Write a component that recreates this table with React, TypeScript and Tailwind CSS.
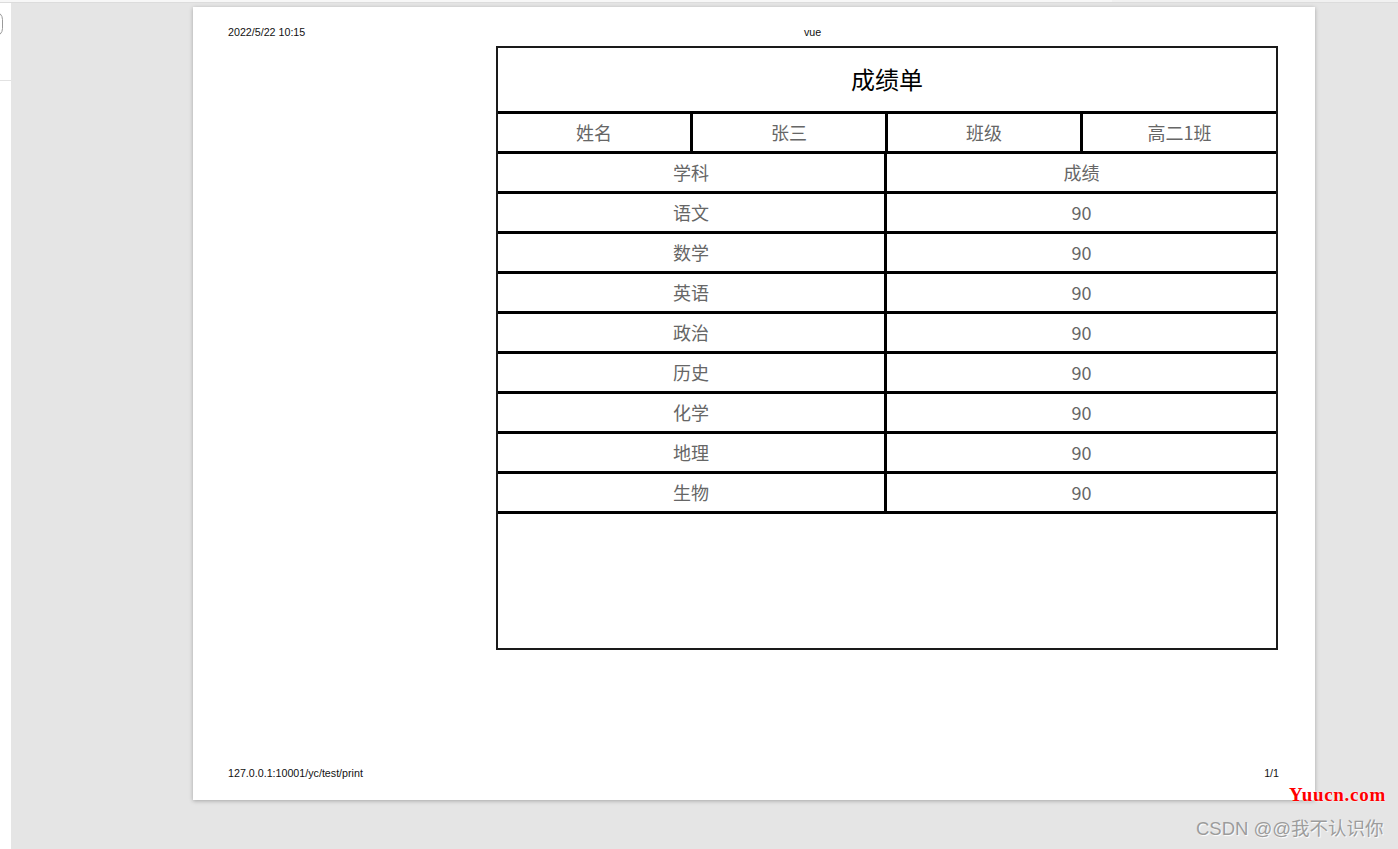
import React from "react";

const subjects = ["语文", "数学", "英语", "政治", "历史", "化学", "地理", "生物"];

const cjk = { fontFamily: '"Noto Sans CJK SC", "Noto Sans", sans-serif' };
const arial = { fontFamily: '"Liberation Sans", Arial, sans-serif' };

function Cell({ w, last, children }: { w: string; last?: boolean; children: React.ReactNode }) {
  return (
    <div className={`${w} ${last ? "" : "border-r-[3px] border-black"} flex items-center justify-center`}>
      {children}
    </div>
  );
}

export default function App() {
  return (
    <div className="relative w-[1398px] h-[849px] bg-[#e5e5e5] overflow-hidden flex flex-col">
      {/* top strip */}
      <div className="w-full h-[3px] bg-[#f1f1f1] border-b border-[#dcdcdc] flex">
        <div className="w-[1112px] h-[2px] bg-[#f7f7f7]" />
      </div>
      <div className="flex flex-1">
        {/* left strip */}
        <div className="relative w-[11px] bg-white flex flex-col">
          <div className="absolute left-[-14px] top-[8px] w-[17px] h-[26px] rounded-full border border-[#9a9a9a]" />
          <div className="mt-[77px] w-[11px] h-px bg-[#e2e2e2]" />
        </div>

        {/* page area */}
        <div className="pl-[182px] pt-[4px]">
          <div className="w-[1122px] h-[793px] bg-white shadow-[0_1px_4px_rgba(0,0,0,0.28)] flex flex-col pt-[18px] pb-[20px]">
            {/* header */}
            <div className="flex px-[35px] text-[10.7px] leading-[14px] text-[#111]" style={arial}>
              <div className="w-[576px]">2022/5/22 10:15</div>
              <div>vue</div>
            </div>

            {/* table */}
            <div className="ml-[303px] mt-[7px] w-[782px] border-2 border-[#1a1a1a]" style={cjk}>
              <div className="h-[66px] pb-[2px] border-b-[3px] border-black flex items-center justify-center text-[24px] text-black">
                成绩单
              </div>
              <div className="h-[40px] border-b-[3px] border-black flex text-[18px] text-[#666]">
                <Cell w="w-[195px]">姓名</Cell>
                <Cell w="w-[195px]">张三</Cell>
                <Cell w="w-[195px]">班级</Cell>
                <Cell w="w-[193px]" last>
                  高二1班
                </Cell>
              </div>
              <div className="h-[40px] border-b-[3px] border-black flex text-[18px] text-[#666]">
                <Cell w="w-[389px]">学科</Cell>
                <Cell w="w-[389px]" last>
                  成绩
                </Cell>
              </div>
              {subjects.map((s) => (
                <div key={s} className="h-[40px] border-b-[3px] border-black flex text-[18px] text-[#666]">
                  <Cell w="w-[389px]">{s}</Cell>
                  <Cell w="w-[389px]" last>
                    90
                  </Cell>
                </div>
              ))}
              <div className="h-[134px]" />
            </div>

            {/* footer */}
            <div className="mt-auto flex justify-between px-[35px] text-[10.7px] leading-[14px] text-[#111]" style={arial}>
              <div>127.0.0.1:10001/yc/test/print</div>
              <div className="pr-[1px]">1/1</div>
            </div>
          </div>
        </div>
      </div>

      {/* watermarks */}
      <div
        className="absolute left-[1289px] top-[784px] text-[19px] leading-[22px] font-bold text-[#ff0000] tracking-[0.7px]"
        style={{ fontFamily: '"Liberation Serif", "Times New Roman", serif', textShadow: "0 0 2px #fff, 0 0 1px #fff" }}
      >
        Yuucn.com
      </div>
      <div
        className="absolute left-[1196px] top-[817px] text-[18.5px] leading-[24px] text-[#9c9c9c]"
        style={{ fontFamily: '"Liberation Sans", "Noto Sans CJK SC", sans-serif', textShadow: "1px 1px 1px #fff" }}
      >
        CSDN @@我不认识你
      </div>
    </div>
  );
}
